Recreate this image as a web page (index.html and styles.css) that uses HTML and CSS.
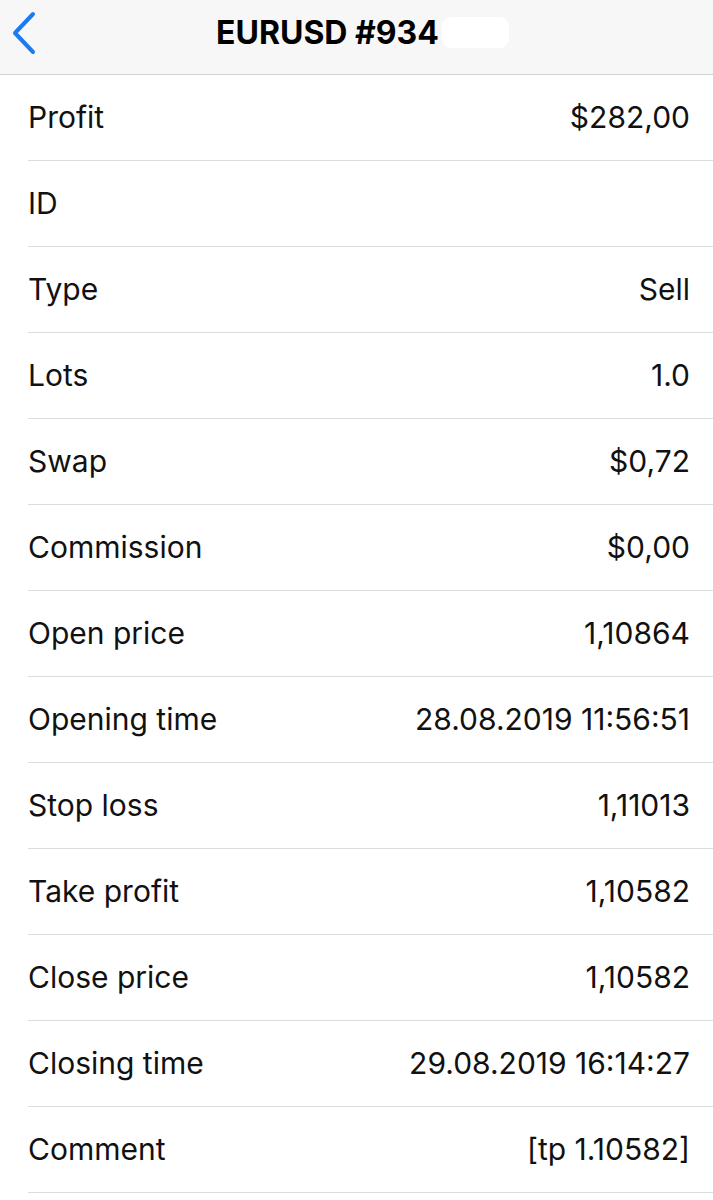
FILE: index.html
```html
<!DOCTYPE html>
<html>
<head>
    <meta charset="UTF-8">
    <meta name="viewport" content="width=device-width, initial-scale=1.0">
    <title>EURUSD #934</title>
    <link rel="stylesheet" href="styles.css">
</head>
<body>
    <header class="navbar">
        <div class="nav-left">
            <svg class="back-icon" width="28" height="44" viewBox="0 0 28 44">
                <path d="M23 3 L5 22 L23 41" fill="none" stroke="#1a7cf5" stroke-width="4" stroke-linecap="round" stroke-linejoin="round"/>
            </svg>
        </div>
        <div class="nav-title">
            <span>EURUSD #934</span>
            <span class="masked"></span>
        </div>
        <div class="nav-right"></div>
    </header>
    <div class="details">
        <div class="row"><span class="label">Profit</span><span class="value">$282,00</span></div>
        <div class="row"><span class="label">ID</span><span class="value"></span></div>
        <div class="row"><span class="label">Type</span><span class="value">Sell</span></div>
        <div class="row"><span class="label">Lots</span><span class="value">1.0</span></div>
        <div class="row"><span class="label">Swap</span><span class="value">$0,72</span></div>
        <div class="row"><span class="label">Commission</span><span class="value">$0,00</span></div>
        <div class="row"><span class="label">Open price</span><span class="value">1,10864</span></div>
        <div class="row"><span class="label">Opening time</span><span class="value">28.08.2019 11:56:51</span></div>
        <div class="row"><span class="label">Stop loss</span><span class="value">1,11013</span></div>
        <div class="row"><span class="label">Take profit</span><span class="value">1,10582</span></div>
        <div class="row"><span class="label">Close price</span><span class="value">1,10582</span></div>
        <div class="row"><span class="label">Closing time</span><span class="value">29.08.2019 16:14:27</span></div>
        <div class="row"><span class="label">Comment</span><span class="value">[tp 1.10582]</span></div>
    </div>
</body>
</html>
```

FILE: styles.css
```css
body {
    margin: 0;
    font-family: Inter, "Liberation Sans", Arial, sans-serif;
    background-color: #ffffff;
    color: #111111;
}
.navbar {
    display: grid;
    grid-template-columns: 1fr auto 1fr;
    align-items: center;
    height: 65px;
    padding-bottom: 9px;
    background-color: #f7f7f7;
    border-bottom: 1px solid #d2d2d2;
}
.nav-left {
    display: flex;
    align-items: center;
    padding-left: 10px;
}
.back-icon {
    display: block;
}
.nav-title {
    display: flex;
    align-items: center;
    font-size: 32px;
    font-weight: 700;
    color: #000000;
    padding-left: 12px;
}
.masked {
    display: inline-block;
    width: 67px;
    height: 31px;
    margin-left: 3px;
    background-color: #ffffff;
    border-radius: 9px;
}
.details {
    display: flex;
    flex-direction: column;
}
.row {
    display: flex;
    justify-content: space-between;
    align-items: center;
    height: 86px;
    margin-left: 28px;
    padding-right: 23px;
    padding-bottom: 2px;
    box-sizing: border-box;
    border-bottom: 1px solid #dcdcdc;
    font-size: 30px;
}
.label {
    color: #111111;
}
.value {
    color: #111111;
    text-align: right;
}
```
